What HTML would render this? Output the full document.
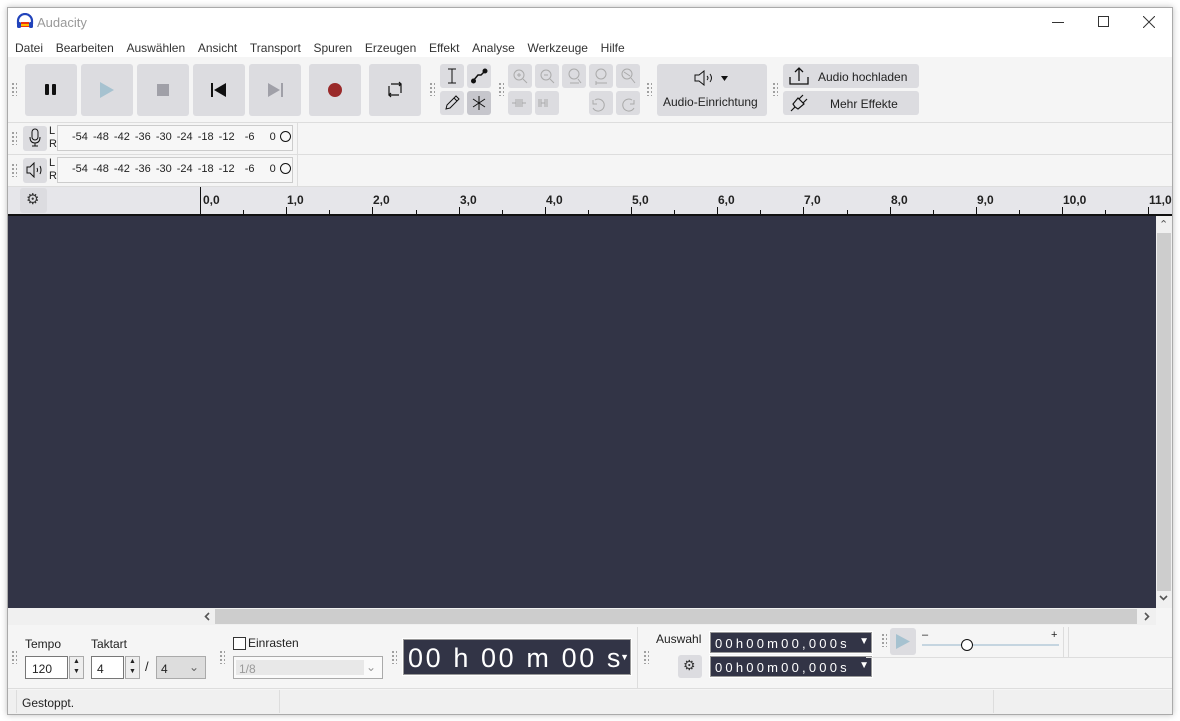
<!DOCTYPE html>
<html><head><meta charset="utf-8"><style>
*{margin:0;padding:0;box-sizing:border-box}
body{width:1180px;height:721px;background:#fff;position:relative;overflow:hidden;font-family:"Liberation Sans",sans-serif;font-size:12px;color:#222}
.a{position:absolute}
.win{left:7px;top:7px;width:1166px;height:708px;border:1px solid #aaa;background:#f5f5f5;box-shadow:0 0 6px rgba(0,0,0,.25)}
.btn{position:absolute;background:#dcdce0;border-radius:3px}
.grip{position:absolute;width:6px;height:14px;background-image:radial-gradient(circle,#999 1px,transparent 1.2px);background-size:4px 4px}
.menu span{margin-right:12.7px}
.tk{position:absolute;width:1px;background:#111}
.rl{position:absolute;font-weight:bold;font-size:12px;top:193px}
.meter{position:absolute;left:55px;width:238px;height:26px;border:1px solid #ccc;background:#f7f7f7;font-size:11px}
.dig{position:absolute;background:#323446;color:#fff;border:1px solid #999;outline:1px solid #fff}
</style></head><body>
<div class="a win"></div>
<div class="a" style="left:8px;top:8px;width:1164px;height:30px;background:#fff"></div>
<svg class="a" style="left:16px;top:13px" width="18" height="16" viewBox="0 0 18 16"><path d="M2 11V8a7 7 0 0 1 14 0v3" fill="none" stroke="#2244bb" stroke-width="2.2"/><rect x="1" y="9" width="4" height="6" rx="1.5" fill="#2244bb"/><rect x="13" y="9" width="4" height="6" rx="1.5" fill="#2244bb"/><rect x="5" y="9" width="8" height="5" fill="#ee3311"/><rect x="5" y="11" width="8" height="2" fill="#ffbb00"/></svg>
<div class="a" style="left:37px;top:15px;font-size:13px;color:#999">Audacity</div>
<div class="a" style="left:1052px;top:22px;width:12px;height:1px;background:#333"></div>
<div class="a" style="left:1098px;top:16px;width:11px;height:11px;border:1px solid #333"></div>
<svg class="a" style="left:1143px;top:16px" width="12" height="12"><path d="M0 0L12 12M12 0L0 12" stroke="#333"/></svg>
<div class="a" style="left:8px;top:38px;width:1164px;height:19px;background:#fff"></div>
<div class="a menu" style="left:15px;top:41px;font-size:12px;color:#333;white-space:nowrap"><span>Datei</span><span>Bearbeiten</span><span>Auswählen</span><span>Ansicht</span><span>Transport</span><span>Spuren</span><span>Erzeugen</span><span>Effekt</span><span>Analyse</span><span>Werkzeuge</span><span>Hilfe</span></div>
<div class="grip" style="left:11px;top:82px"></div>
<div class="btn" style="left:25px;top:64px;width:52px;height:52px"></div>
<div class="a" style="left:45px;top:84px;width:4px;height:11px;background:#111;border-radius:1px"></div><div class="a" style="left:52px;top:84px;width:4px;height:11px;background:#111;border-radius:1px"></div>
<div class="btn" style="left:81px;top:64px;width:52px;height:52px"></div>
<svg class="a" style="left:99px;top:82px" width="16" height="16"><path d="M1 0L15 8L1 16Z" fill="#a6c2d0"/></svg>
<div class="btn" style="left:137px;top:64px;width:52px;height:52px"></div>
<div class="a" style="left:157px;top:84px;width:12px;height:12px;background:#a0a0a8"></div>
<div class="btn" style="left:193px;top:64px;width:52px;height:52px"></div>
<svg class="a" style="left:211px;top:83px" width="16" height="14"><rect x="0" y="0" width="2" height="14" fill="#111"/><path d="M15 0L3 7L15 14Z" fill="#111"/></svg>
<div class="btn" style="left:249px;top:64px;width:52px;height:52px"></div>
<svg class="a" style="left:267px;top:83px" width="16" height="14"><path d="M1 0L13 7L1 14Z" fill="#a0a0a8"/><rect x="14" y="0" width="2" height="14" fill="#a0a0a8"/></svg>
<div class="btn" style="left:309px;top:64px;width:52px;height:52px"></div>
<div class="a" style="left:328px;top:83px;width:14px;height:14px;border-radius:50%;background:#9a2a2a"></div>
<div class="btn" style="left:369px;top:64px;width:52px;height:52px"></div>
<svg class="a" style="left:387px;top:81px" width="16" height="17" fill="none" stroke="#111" stroke-width="1.2"><path d="M4 3H14V12M12 14H2V5M12 1L14 3L12 5M4 12L2 14L4 16"/></svg>
<div class="grip" style="left:429px;top:82px"></div>
<div class="btn" style="left:440px;top:64px;width:24px;height:24px"></div>
<svg class="a" style="left:445px;top:68px" width="14" height="16" stroke="#111" fill="none"><path d="M3 1H11M7 1V15M3 15H11"/></svg>
<div class="btn" style="left:467px;top:64px;width:24px;height:24px"></div>
<svg class="a" style="left:470px;top:67px" width="18" height="18" stroke="#111" fill="#111"><path d="M3 14L8 8H11L15 4" fill="none" stroke-width="1.5"/><circle cx="3.5" cy="14" r="2"/><circle cx="15" cy="4" r="2"/></svg>
<div class="btn" style="left:440px;top:91px;width:24px;height:24px"></div>
<svg class="a" style="left:444px;top:95px" width="16" height="16" fill="none" stroke="#111"><path d="M2 14L3 10L12 1L15 4L6 13Z M10 3L13 6"/></svg>
<div class="btn" style="left:467px;top:91px;width:24px;height:24px;background:#c6c6cc"></div>
<svg class="a" style="left:471px;top:95px" width="16" height="16" stroke="#111"><path d="M8 1V15M2 4L14 12M14 4L2 12"/></svg>
<div class="grip" style="left:498px;top:82px"></div>
<div class="btn" style="left:508px;top:64px;width:24px;height:24px"></div><div class="btn" style="left:535px;top:64px;width:24px;height:24px"></div><div class="btn" style="left:562px;top:64px;width:24px;height:24px"></div><div class="btn" style="left:589px;top:64px;width:24px;height:24px"></div><div class="btn" style="left:616px;top:64px;width:24px;height:24px"></div>
<div class="btn" style="left:508px;top:91px;width:24px;height:24px"></div><div class="btn" style="left:535px;top:91px;width:24px;height:24px"></div><div class="btn" style="left:589px;top:91px;width:24px;height:24px"></div><div class="btn" style="left:616px;top:91px;width:24px;height:24px"></div>
<svg class="a" style="left:508px;top:64px" width="135" height="52" fill="none" stroke="#aaa"><circle cx="11" cy="11" r="5"/><path d="M15 15L19 19M9 11H13M11 9V13"/><circle cx="38" cy="11" r="5"/><path d="M42 15L46 19M36 11H40"/><circle cx="66" cy="10" r="5"/><path d="M62 19H71M70 15L73 19"/><circle cx="93" cy="10" r="5"/><path d="M88 19H99M88 17V21"/><circle cx="119" cy="10" r="5"/><path d="M123 14L127 19M116 8L122 12"/><path d="M4 39H8M8 35V43M10 35V43M12 35V43M14 35V43M14 39H18M31 35V43M33 35V43M37 35V43M39 35V43M33 39H37"/><path d="M87 36A6 6 0 1 1 85 44M85 36V40H89M124 36A6 6 0 1 0 126 44M126 36V40H122"/></svg>
<div class="grip" style="left:646px;top:82px"></div>
<div class="btn" style="left:657px;top:64px;width:110px;height:52px"></div>
<svg class="a" style="left:694px;top:70px" width="22" height="16" fill="none" stroke="#111"><path d="M1 5H5L10 1V15L5 11H1Z M13 6Q15 8 13 10 M16 4Q19 8 16 12"/></svg>
<svg class="a" style="left:721px;top:76px" width="7" height="5"><path d="M0 0H7L3.5 5Z" fill="#111"/></svg>
<div class="a" style="left:663px;top:95px;font-size:12px">Audio-Einrichtung</div>
<div class="grip" style="left:772px;top:82px"></div>
<div class="btn" style="left:783px;top:64px;width:136px;height:24px"></div>
<svg class="a" style="left:789px;top:66px" width="20" height="20" fill="none" stroke="#111" stroke-width="1.3"><path d="M1 11V18H19V11M10 15V2M6 6L10 2L14 6"/></svg>
<div class="a" style="left:818px;top:70px">Audio hochladen</div>
<div class="btn" style="left:783px;top:91px;width:136px;height:24px"></div>
<svg class="a" style="left:789px;top:93px" width="20" height="20" fill="none" stroke="#111" stroke-width="1.2"><path d="M2 18L6 14M6 14L4 11L9 5L15 11L9 16ZM10 6L14 2M14 10L18 6"/></svg>
<div class="a" style="left:830px;top:97px">Mehr Effekte</div>
<div class="a" style="left:8px;top:122px;width:1164px;height:1px;background:#ddd"></div>
<div class="a" style="left:8px;top:154px;width:1164px;height:1px;background:#ddd"></div>
<div class="a" style="left:8px;top:186px;width:1164px;height:1px;background:#ddd"></div>
<div class="a" style="left:297px;top:123px;width:1px;height:63px;background:#ddd"></div>
<div class="grip" style="left:11px;top:131px"></div><div class="grip" style="left:11px;top:163px"></div>
<div class="btn" style="left:23px;top:126px;width:24px;height:25px"></div>
<svg class="a" style="left:28px;top:128px" width="14" height="20" fill="none" stroke="#111"><rect x="4" y="1" width="6" height="11" rx="3"/><path d="M2 9Q2 15 7 15Q12 15 12 9M7 15V18M4 18H10"/></svg>
<div class="btn" style="left:23px;top:158px;width:24px;height:25px"></div>
<svg class="a" style="left:26px;top:162px" width="20" height="16" fill="none" stroke="#111"><path d="M1 5H4L8 1V15L4 11H1Z M11 6Q12 8 11 10 M14 4Q16 8 14 12"/></svg>
<div class="a" style="left:49px;top:125px;font-size:11px;line-height:13px;background:#f5f5f5;width:7px">L<br>R</div>
<div class="a" style="left:49px;top:157px;font-size:11px;line-height:13px;background:#f5f5f5;width:7px">L<br>R</div>
<div class="meter" style="top:125px;left:57px;width:236px"></div><div class="meter" style="top:157px;left:57px;width:236px"></div>
<div class="a" style="left:72px;top:131px;font-size:11px;word-spacing:2px;white-space:nowrap">-54 -48 -42 -36 -30 -24 -18 -12 &nbsp;-6 &nbsp;&nbsp;0</div>
<div class="a" style="left:72px;top:163px;font-size:11px;word-spacing:2px;white-space:nowrap">-54 -48 -42 -36 -30 -24 -18 -12 &nbsp;-6 &nbsp;&nbsp;0</div>
<div class="a" style="left:280px;top:131px;width:11px;height:11px;border:1px solid #111;border-radius:50%;background:#f7f7f7"></div>
<div class="a" style="left:280px;top:163px;width:11px;height:11px;border:1px solid #111;border-radius:50%;background:#f7f7f7"></div>
<div class="a" style="left:8px;top:187px;width:1164px;height:28px;background:#e6e6ea"></div>
<div class="btn" style="left:20px;top:188px;width:27px;height:25px"></div>
<div class="a" style="left:26px;top:190px;font-size:15px;color:#333">⚙</div>
<div class="tk" style="left:200px;top:187px;height:28px"></div>
<div id="ruler"></div>
<div class="a" style="left:8px;top:214px;width:1164px;height:2px;background:#111"></div>
<div class="a" style="left:8px;top:216px;width:1148px;height:392px;background:#323446"></div>
<div class="a" style="left:1156px;top:216px;width:16px;height:392px;background:#f0f0f0"></div>
<div class="a" style="left:1157px;top:233px;width:14px;height:358px;background:#cdcdcd"></div>
<div class="a" style="left:1159px;top:218px;font-size:11px;color:#555">⌃</div>
<svg class="a" style="left:1159px;top:595px" width="9" height="6"><path d="M1 1L4.5 4.5L8 1" stroke="#555" stroke-width="1.6" fill="none"/></svg>
<div class="a" style="left:8px;top:608px;width:1148px;height:17px;background:#f0f0f0"></div>
<div class="a" style="left:215px;top:609px;width:922px;height:15px;background:#cdcdcd"></div>
<svg class="a" style="left:204px;top:612px" width="6" height="9"><path d="M5 1L1.5 4.5L5 8" stroke="#555" stroke-width="1.6" fill="none"/></svg>
<svg class="a" style="left:1144px;top:612px" width="6" height="9"><path d="M1 1L4.5 4.5L1 8" stroke="#555" stroke-width="1.6" fill="none"/></svg>
<div class="grip" style="left:11px;top:650px"></div>
<div class="a" style="left:25px;top:637px">Tempo</div>
<div class="a" style="left:91px;top:637px">Taktart</div>
<div class="a" style="left:25px;top:656px;width:43px;height:23px;border:1px solid #777;background:#fff;padding:5px 0 0 6px">120</div>
<div class="a" style="left:69px;top:656px;width:15px;height:23px;border:1px solid #aaa;background:#eee;font-size:7px;line-height:10px;text-align:center">▲<br>▼</div>
<div class="a" style="left:91px;top:656px;width:33px;height:23px;border:1px solid #777;background:#fff;padding:5px 0 0 5px">4</div>
<div class="a" style="left:125px;top:656px;width:15px;height:23px;border:1px solid #aaa;background:#eee;font-size:7px;line-height:10px;text-align:center">▲<br>▼</div>
<div class="a" style="left:145px;top:659px;font-size:13px">/</div>
<div class="a" style="left:156px;top:656px;width:50px;height:23px;border:1px solid #aaa;background:#ddd;padding:5px 0 0 4px">4<span style="position:absolute;right:6px;top:3px;color:#666">⌄</span></div>
<div class="grip" style="left:219px;top:650px"></div>
<div class="a" style="left:233px;top:637px;width:13px;height:13px;border:1px solid #333;background:#fff"></div>
<div class="a" style="left:248px;top:636px">Einrasten</div>
<div class="a" style="left:233px;top:656px;width:150px;height:23px;border:1px solid #aaa;background:#fafafa;color:#999;padding:5px 0 0 5px"><div class="a" style="left:2px;top:3px;width:128px;height:15px;background:#e8e8e8"></div><span style="position:relative">1/8</span><span style="position:absolute;right:6px;top:3px">⌄</span></div>
<div class="grip" style="left:391px;top:650px"></div>
<div class="dig" style="left:403px;top:639px;width:228px;height:36px;font-size:27px;padding:3px 0 0 4px;letter-spacing:2.6px;white-space:nowrap">00 h 00 m 00 s<span style="font-size:9px;position:absolute;right:1px;top:12px;letter-spacing:0">▼</span></div>
<div class="a" style="left:637px;top:627px;width:1px;height:61px;background:#ddd"></div>
<div class="grip" style="left:643px;top:650px"></div>
<div class="a" style="left:656px;top:632px">Auswahl</div>
<div class="btn" style="left:678px;top:655px;width:24px;height:23px"></div>
<div class="a" style="left:683px;top:657px;font-size:14px;color:#333">⚙</div>
<div class="dig" style="left:710px;top:632px;width:162px;height:21px;font-size:13px;padding:3px 0 0 4px;letter-spacing:3.2px;white-space:nowrap">00h00m00,000s<span style="position:absolute;right:2px;top:3px;font-size:10px;letter-spacing:0">▼</span></div>
<div class="dig" style="left:710px;top:656px;width:162px;height:21px;font-size:13px;padding:3px 0 0 4px;letter-spacing:3.2px;white-space:nowrap">00h00m00,000s<span style="position:absolute;right:2px;top:3px;font-size:10px;letter-spacing:0">▼</span></div>
<div class="grip" style="left:881px;top:633px"></div>
<div class="btn" style="left:890px;top:628px;width:26px;height:27px"></div>
<svg class="a" style="left:896px;top:634px" width="14" height="15"><path d="M0 0L14 7.5L0 15Z" fill="#a6c2d0"/></svg>
<div class="a" style="left:922px;top:629px;font-size:11px">–</div>
<div class="a" style="left:1051px;top:629px;font-size:11px">+</div>
<div class="a" style="left:922px;top:644px;width:137px;height:2px;background:#c5d5e0"></div>
<div class="a" style="left:961px;top:639px;width:12px;height:12px;border:1px solid #111;border-radius:50%;background:#fff"></div>
<div class="a" style="left:866px;top:657px;width:306px;height:1px;background:#ddd"></div>
<div class="a" style="left:1063px;top:627px;width:1px;height:30px;background:#ddd"></div>
<div class="a" style="left:1068px;top:627px;width:1px;height:30px;background:#ddd"></div>
<div class="a" style="left:8px;top:688px;width:1164px;height:1px;background:#ddd"></div>
<div class="a" style="left:8px;top:690px;width:1164px;height:24px;background:#f0f0f0"></div>
<div class="a" style="left:16px;top:690px;width:1px;height:23px;background:#ddd"></div>
<div class="a" style="left:279px;top:690px;width:1px;height:23px;background:#ddd"></div>
<div class="a" style="left:993px;top:690px;width:1px;height:23px;background:#ddd"></div>
<div class="a" style="left:22px;top:696px">Gestoppt.</div>
<script>
var r=document.getElementById('ruler'),h='';
for(var i=0;i<=22;i++){var x=200+i*43.1;if(x>1160)break;var maj=i%2==0;
if(i>0)h+='<div class="tk" style="left:'+Math.round(x)+'px;top:'+(maj?207:210)+'px;height:'+(maj?7:4)+'px"></div>';
if(maj)h+='<div class="rl" style="left:'+Math.round(x+(i==0?3:1))+'px">'+(i/2)+',0</div>';}
r.innerHTML=h;
</script>
</body></html>
